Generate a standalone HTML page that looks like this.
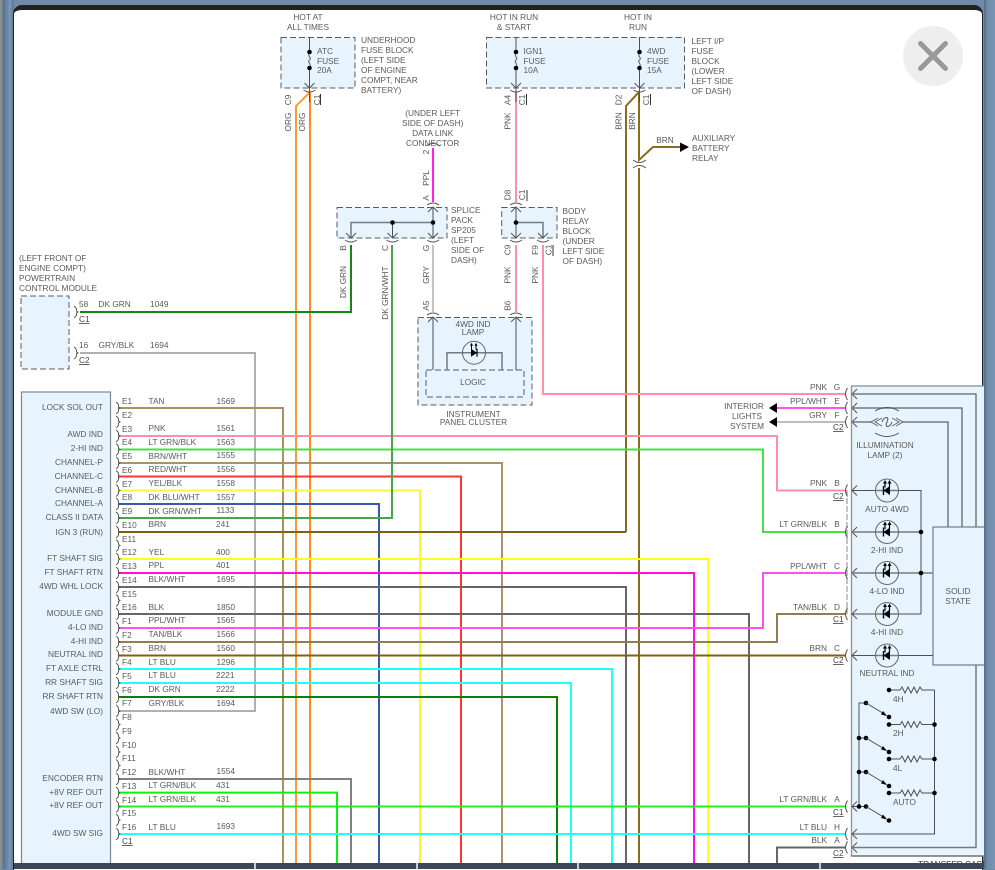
<!DOCTYPE html>
<html>
<head>
<meta charset="utf-8">
<style>
html,body{margin:0;padding:0;width:995px;height:869px;overflow:hidden;background:#6f8ba8;}
#strip{position:absolute;left:0;top:0;width:14px;height:869px;background:linear-gradient(90deg,#8a8d90 0,#8a8d90 2px,#56728f 3px,#7a96b3 10px,#5f7b98 13px);}
#right{position:absolute;left:984px;top:0;width:11px;height:869px;background:linear-gradient(90deg,#4f6a86 0,#6f8ba8 3px,#7a96b3 100%);}
#panel{position:absolute;left:13px;top:5px;width:968px;height:860px;background:#fff;border-top:5px solid #222;border-left:1.5px solid #222;border-right:1.5px solid #222;border-radius:9px 9px 0 0;box-sizing:content-box;}
#bar{position:absolute;left:14px;top:863px;width:970px;height:6px;background:#3d4756;}
.tick{position:absolute;top:863px;width:2px;height:6px;background:#c8ccd0;}
svg#d{position:absolute;left:0;top:0;filter:blur(.35px);}
#close{position:absolute;left:903px;top:26px;width:60px;height:60px;border-radius:50%;background:#eeeeee;}
#x{position:absolute;left:903px;top:26px;}
text{font-family:"Liberation Sans",sans-serif;font-size:8.3px;fill:#5a5a5a;}
.w{fill:none;stroke-width:2;stroke-linejoin:miter;}
.g{fill:none;stroke:#4a5055;stroke-width:1;}
.g2{fill:none;stroke:#727b80;stroke-width:1.5;}
.dash{stroke:#555c61;stroke-width:1;stroke-dasharray:6 3;}
.k{fill:#000;}
.m{text-anchor:middle;}
.e{text-anchor:end;}
.u{text-decoration:underline;fill:#444;}
</style>
</head>
<body>
<div id="strip"></div>
<div id="panel"></div>
<svg id="d" width="995" height="869" viewBox="0 0 995 869" xmlns="http://www.w3.org/2000/svg">
<defs>
<g id="lc"><path d="M116 -6Q119 -4 118.5 -1L120 0L118.5 1Q119 4 116 6" fill="none" stroke="#555" stroke-width="1"/></g>
<g id="rc"><path d="M847.5 -6Q843.5 0 847.5 6" fill="none" stroke="#555" stroke-width="1"/><path d="M857 -5L852 0L857 5" fill="none" stroke="#555" stroke-width="1"/></g>
<g id="dn"><path d="M-5 -5L0 0L5 -5M-6 2Q0 6 6 2" fill="none" stroke="#555" stroke-width="1"/></g>
<g id="up"><path d="M-5 5L0 0L5 5M-6 -2Q0 -6 6 -2" fill="none" stroke="#555" stroke-width="1"/></g>
<g id="fuse"><path d="M0 -15V0M0 16V50" class="g"/><path d="M0 0C-3 4 3 6 0 8C-3 10 3 12 0 16" fill="none" stroke="#555" stroke-width="1"/><circle cx="0" cy="0" r="2.3" class="k"/><circle cx="0" cy="16" r="2.3" class="k"/></g>
<g id="led"><circle cx="0" cy="0" r="11.5" fill="none" stroke="#666" stroke-width="1"/><path d="M-3.5 0L3 -4.5V4.5Z" class="k"/><path d="M-3.5 -4.5V4.5" stroke="#000" stroke-width="1.4"/><path d="M-2 -3V-8M2.5 -3V-8" stroke="#000" stroke-width="1.2"/><path d="M-4 -7L-2 -10.5L0 -7ZM.5 -7L2.5 -10.5L4.5 -7Z" class="k"/></g>
<g id="ledr"><circle cx="0" cy="0" r="11.5" fill="none" stroke="#666" stroke-width="1"/><path d="M3 0L-3 -4V4Z" class="k"/><path d="M3 -4V4" stroke="#000" stroke-width="1.2"/><path d="M-2.5 -3V-8M2 -3V-8" stroke="#000" stroke-width="1"/><path d="M-4 -7L-2.5 -10L-1 -7ZM.5 -7L2 -10L3.5 -7Z" class="k"/></g>
<g id="res"><path d="M889 0H900l2 -3l3 6l3 -6l3 6l3 -6l3 6l3 -6l2 3H934.5" class="g"/><circle cx="889" cy="0" r="2.3" class="k"/></g>
<g id="sw"><circle cx="866" cy="0" r="2.3" class="k"/><circle cx="889" cy="14" r="2.3" class="k"/><path d="M866 0L886 12" class="g"/><path d="M887 13L881 11.5L883 8Z" class="k"/></g>
</defs>

<!-- blue fills -->
<rect x="281" y="37.5" width="74" height="50.5" fill="#e8f4fd"/>
<rect x="486.5" y="37.5" width="198" height="50.5" fill="#e8f4fd"/>
<rect x="337" y="207.5" width="110" height="30.5" fill="#e8f4fd"/>
<rect x="501.7" y="207.5" width="55.3" height="30.5" fill="#e8f4fd"/>
<rect x="418" y="317.5" width="114" height="87.5" fill="#e8f4fd"/>
<rect x="21" y="296" width="48" height="73" fill="#e8f4fd"/>
<rect x="21.5" y="392" width="89" height="475" fill="#e8f4fd" stroke="#7d868b" stroke-width="1.2"/>
<rect x="851.5" y="386" width="135" height="470" fill="#e8f4fd" stroke="#8f989d" stroke-width="1.4"/>
<path d="M851.5 856H983" stroke="#555" stroke-width="1"/>

<!-- wires -->
<path class="w" stroke="#ff9a30" d="M296 866V106L310 92"/>
<path class="w" stroke="#ff8a20" d="M310 92V866"/>
<path class="w" stroke="#ff8fa8" d="M516 92V202M516 245V312"/>
<path class="w" stroke="#ff20ee" d="M433 148V202"/>
<path class="w" stroke="#c4c4c4" d="M433 245V312"/>
<path class="w" stroke="#8a6c20" d="M626 532V106L639 92V160L653 147H681M639 168V866"/>
<path class="w" stroke="#128a12" d="M80 312H351V245"/>
<path class="w" stroke="#ff8fa8" d="M543 245V394H845"/>
<path class="w" stroke="#ff50f0" d="M777 408H845"/>
<path class="w" stroke="#bdbdbd" d="M777 422H845"/>
<path class="w" stroke="#b0b0b0" d="M80 353H255V711H118"/>
<path class="w" stroke="#a8935c" d="M118 408H283V866"/>
<path class="w" stroke="#ff8fa8" d="M118 436H777V490.5H845"/>
<path class="w" stroke="#44e044" d="M118 449.5H763V532H845"/>
<path class="w" stroke="#a89268" d="M118 463H502V866"/>
<path class="w" stroke="#ff3535" d="M118 476.5H461V866"/>
<path class="w" stroke="#f8f830" d="M118 490.5H420V866"/>
<path class="w" stroke="#3a58b0" d="M118 504H379V866"/>
<path class="w" stroke="#4aa54a" d="M118 518H392V245"/>
<path class="w" stroke="#80610f" d="M118 532H626"/>
<path class="w" stroke="#ffff20" d="M118 559H708V866"/>
<path class="w" stroke="#ff10e0" d="M118 573H694V866"/>
<path class="w" stroke="#666" d="M118 587H626V866"/>
<path class="w" stroke="#666" d="M118 614H749V866"/>
<path class="w" stroke="#ff50f0" d="M118 628H763V573H845"/>
<path class="w" stroke="#8f7e55" d="M118 642H777V614H845"/>
<path class="w" stroke="#80610f" d="M118 655.5H845"/>
<path class="w" stroke="#20ffff" d="M118 669H612V866"/>
<path class="w" stroke="#20ffff" d="M118 683H571V866"/>
<path class="w" stroke="#0a800a" d="M118 697H557V866"/>
<path class="w" stroke="#808080" d="M118 779H351V866"/>
<path class="w" stroke="#10f010" d="M118 792.6H337V866"/>
<path class="w" stroke="#20f020" d="M118 806.5H845"/>
<path class="w" stroke="#20ffff" d="M118 834H845"/>
<path class="w" stroke="#666" d="M845 847.5H777V866"/>
<path d="M847 490V614" stroke="#888" stroke-width="1" stroke-dasharray="6 2"/>

<!-- triangles -->
<path class="k" d="M680 142.5L689 147L680 152Z"/>
<path class="k" d="M769 408L777 403V413Z"/>
<path class="k" d="M769 422L777 417V427Z"/>

<!-- connectors left -->
<use href="#lc" y="408"/><use href="#lc" y="422"/><use href="#lc" y="436"/><use href="#lc" y="449.5"/><use href="#lc" y="463"/><use href="#lc" y="476.5"/><use href="#lc" y="490.5"/><use href="#lc" y="504"/><use href="#lc" y="518"/><use href="#lc" y="532"/><use href="#lc" y="545.5"/><use href="#lc" y="559"/><use href="#lc" y="573"/><use href="#lc" y="587"/><use href="#lc" y="600.5"/><use href="#lc" y="614"/><use href="#lc" y="628"/><use href="#lc" y="642"/><use href="#lc" y="655.5"/><use href="#lc" y="669"/><use href="#lc" y="683"/><use href="#lc" y="697"/><use href="#lc" y="711"/><use href="#lc" y="724.5"/><use href="#lc" y="738"/><use href="#lc" y="752"/><use href="#lc" y="765.5"/><use href="#lc" y="779"/><use href="#lc" y="793"/><use href="#lc" y="806.5"/><use href="#lc" y="820"/><use href="#lc" y="834"/>
<use href="#lc" x="-42" y="312"/><use href="#lc" x="-42" y="353"/>

<!-- connectors right -->
<use href="#rc" y="394"/><use href="#rc" y="408"/><use href="#rc" y="422"/><use href="#rc" y="490.5"/><use href="#rc" y="532"/><use href="#rc" y="573"/><use href="#rc" y="614"/><use href="#rc" y="655.5"/><use href="#rc" y="806.5"/><use href="#rc" y="834"/><use href="#rc" y="847.5"/>

<!-- dashed boxes -->
<rect x="281" y="37.5" width="74" height="50.5" fill="none" class="dash"/>
<rect x="486.5" y="37.5" width="198" height="50.5" fill="none" class="dash"/>
<rect x="337" y="207.5" width="110" height="30.5" fill="none" class="dash"/>
<rect x="501.7" y="207.5" width="55.3" height="30.5" fill="none" class="dash"/>
<rect x="418" y="317.5" width="114" height="87.5" fill="none" class="dash"/>
<rect x="426" y="370" width="98" height="27" fill="none" class="dash"/>
<rect x="21" y="296" width="48" height="73" fill="none" class="dash"/>

<!-- fuses -->
<use href="#fuse" x="309.5" y="52"/><use href="#dn" x="309.5" y="88"/>
<use href="#fuse" x="516" y="52"/><use href="#dn" x="516" y="88"/>
<use href="#fuse" x="639.5" y="52"/><use href="#dn" x="639.5" y="88"/>
<path d="M633 160Q639.5 165 646 160M633 168Q639.5 163 646 168" fill="none" stroke="#555"/>

<!-- splice -->
<path class="g2" d="M351 238V222.5H433"/>
<path class="g" d="M392.5 222.5V238M433 207.5V238M516 207.5V238"/>
<path class="g2" d="M516 222.5H543V238"/>
<circle cx="392.5" cy="222.5" r="2.3" class="k"/><circle cx="433" cy="222.5" r="2.3" class="k"/><circle cx="516" cy="222.5" r="2.3" class="k"/>
<use href="#dn" x="351" y="238"/><use href="#dn" x="392.5" y="238"/><use href="#dn" x="433" y="238"/><use href="#dn" x="516" y="238"/><use href="#dn" x="543" y="238"/>
<use href="#up" x="433" y="207"/><use href="#up" x="516" y="207"/>
<use href="#up" x="433" y="317"/><use href="#up" x="516" y="317"/>
<path d="M426 146Q433 141 440 146" fill="none" stroke="#555"/>

<!-- cluster -->
<path class="g" d="M433 317V370M516 317V370"/>
<path class="g2" d="M447 370V352.7H502V370"/>
<use href="#ledr" x="474" y="352.7"/>

<!-- right box internals -->
<path class="g2" d="M852 394H976V527M976 665V847.5H852"/>
<path class="g2" d="M852 408H962V527"/>
<path class="g2" d="M852 422H872M902 422H948V527"/>
<rect x="933" y="527" width="54" height="138" fill="#e8f4fd" stroke="#5c6368" stroke-width="1"/>
<path class="g" d="M852 490.5H921V614M852 614H921M852 655.5H933"/>
<path class="g2" d="M852 532H921M852 573H933"/>
<circle cx="921" cy="532" r="2.3" class="k"/><circle cx="921" cy="573" r="2.3" class="k"/>
<circle cx="887" cy="490.5" r="11.5" fill="#e8f4fd"/><circle cx="887" cy="532" r="11.5" fill="#e8f4fd"/><circle cx="887" cy="573" r="11.5" fill="#e8f4fd"/><circle cx="887" cy="614" r="11.5" fill="#e8f4fd"/><circle cx="887" cy="655.5" r="11.5" fill="#e8f4fd"/>
<path class="g2" d="M876 490.5H898M876 532H898M876 573H898M876 614H898M876 655.5H898"/>
<use href="#led" x="887" y="490.5"/><use href="#led" x="887" y="532"/><use href="#led" x="887" y="573"/><use href="#led" x="887" y="614"/><use href="#led" x="887" y="655.5"/>
<!-- lamp -->
<path d="M875 411Q887 404 899 411M875 433Q887 440 899 433" fill="none" stroke="#555" stroke-width="1"/>
<path d="M878 418L871 422L878 426M882 418L875 422L882 426M896 418L903 422L896 426M892 418L899 422L892 426" fill="none" stroke="#666" stroke-width="1"/>
<path d="M882 422C884 416 890 416 887 422C884 428 890 428 892 422" fill="none" stroke="#555" stroke-width="1"/>
<!-- switch -->
<path class="g" d="M934.5 690V834H852M866 703H859V806.5M852 806.5H866M859 738H866M859 772H866"/>
<use href="#res" y="690"/><use href="#res" y="724.5"/><use href="#res" y="759"/><use href="#res" y="793"/>
<circle cx="934.5" cy="724.5" r="2.3" class="k"/><circle cx="934.5" cy="759" r="2.3" class="k"/><circle cx="934.5" cy="793" r="2.3" class="k"/>
<use href="#sw" y="703"/><use href="#sw" y="738"/><use href="#sw" y="772"/><use href="#sw" y="806.5"/>
<circle cx="859" cy="738" r="2.3" class="k"/><circle cx="859" cy="772" r="2.3" class="k"/><circle cx="859" cy="806.5" r="2.3" class="k"/>

<!-- top labels -->
<text x="308" y="20" class="m">HOT AT</text><text x="308" y="30" class="m">ALL TIMES</text>
<text x="514" y="20" class="m">HOT IN RUN</text><text x="514" y="30" class="m">&amp; START</text>
<text x="638" y="20" class="m">HOT IN</text><text x="638" y="30" class="m">RUN</text>
<text x="317" y="54">ATC</text><text x="317" y="64">FUSE</text><text x="317" y="73">20A</text>
<text x="523.5" y="54">IGN1</text><text x="523.5" y="64">FUSE</text><text x="523.5" y="73">10A</text>
<text x="647" y="54">4WD</text><text x="647" y="64">FUSE</text><text x="647" y="73">15A</text>
<text x="361" y="43">UNDERHOOD</text><text x="361" y="53">FUSE BLOCK</text><text x="361" y="63">(LEFT SIDE</text><text x="361" y="73">OF ENGINE</text><text x="361" y="83">COMPT, NEAR</text><text x="361" y="93">BATTERY)</text>
<text x="691.5" y="44">LEFT I/P</text><text x="691.5" y="54">FUSE</text><text x="691.5" y="64">BLOCK</text><text x="691.5" y="74">(LOWER</text><text x="691.5" y="84">LEFT SIDE</text><text x="691.5" y="94">OF DASH)</text>
<text x="665" y="143" class="m">BRN</text>
<text x="692" y="141">AUXILIARY</text><text x="692" y="151">BATTERY</text><text x="692" y="161">RELAY</text>
<text x="432.7" y="116" class="m">(UNDER LEFT</text><text x="432.7" y="126" class="m">SIDE OF DASH)</text><text x="432.7" y="136" class="m">DATA LINK</text><text x="432.7" y="146" class="m">CONNECTOR</text>
<text x="451" y="213">SPLICE</text><text x="451" y="223">PACK</text><text x="451" y="233">SP205</text><text x="451" y="243">(LEFT</text><text x="451" y="253">SIDE OF</text><text x="451" y="263">DASH)</text>
<text x="562.5" y="214">BODY</text><text x="562.5" y="224">RELAY</text><text x="562.5" y="234">BLOCK</text><text x="562.5" y="244">(UNDER</text><text x="562.5" y="254">LEFT SIDE</text><text x="562.5" y="264">OF DASH)</text>
<text x="473" y="327" class="m">4WD IND</text><text x="473" y="335" class="m">LAMP</text>
<text x="473" y="385" class="m">LOGIC</text>
<text x="473.5" y="417" class="m">INSTRUMENT</text><text x="473.5" y="425" class="m">PANEL CLUSTER</text>

<!-- rotated labels -->
<g class="m" text-anchor="middle">
<text transform="translate(291,100) rotate(-90)">C9</text>
<text transform="translate(291,122) rotate(-90)">ORG</text>
<text transform="translate(305,122) rotate(-90)">ORG</text>
<text transform="translate(320,100) rotate(-90)">C1</text>
<text transform="translate(510.7,100) rotate(-90)">A4</text>
<text transform="translate(525,100) rotate(-90)">C1</text>
<text transform="translate(510.7,121) rotate(-90)">PNK</text>
<text transform="translate(621.6,100) rotate(-90)">D2</text>
<text transform="translate(621.6,121) rotate(-90)">BRN</text>
<text transform="translate(635,121) rotate(-90)">BRN</text>
<text transform="translate(649,100) rotate(-90)">C1</text>
<text transform="translate(429,152) rotate(-90)">2</text>
<text transform="translate(429,178) rotate(-90)">PPL</text>
<text transform="translate(429,198) rotate(-90)">A</text>
<text transform="translate(346,248) rotate(-90)">B</text>
<text transform="translate(346,282) rotate(-90)">DK GRN</text>
<text transform="translate(388,248) rotate(-90)">C</text>
<text transform="translate(388,293) rotate(-90)">DK GRN/WHT</text>
<text transform="translate(429,248) rotate(-90)">G</text>
<text transform="translate(429,275) rotate(-90)">GRY</text>
<text transform="translate(429,305.7) rotate(-90)">A5</text>
<text transform="translate(510.7,305.7) rotate(-90)">B6</text>
<text transform="translate(510.7,250) rotate(-90)">C9</text>
<text transform="translate(510.7,275) rotate(-90)">PNK</text>
<text transform="translate(538,250) rotate(-90)">F9</text>
<text transform="translate(538,275) rotate(-90)">PNK</text>
<text transform="translate(551.7,250) rotate(-90)">C1</text>
<text transform="translate(510.7,195) rotate(-90)">D8</text>
<text transform="translate(525,195) rotate(-90)">C1</text>
</g>
<path d="M320.5 94V105M526.5 94V105M650.5 94V105M527 190V201M553 245V256" stroke="#333" stroke-width="1"/>

<!-- PCM -->
<text x="19" y="261">(LEFT FRONT OF</text><text x="19" y="271">ENGINE COMPT)</text><text x="19" y="281">POWERTRAIN</text><text x="19" y="291">CONTROL MODULE</text>
<text x="79" y="307">58</text><text x="98.5" y="307">DK GRN</text><text x="150" y="307">1049</text><text x="79" y="322" class="u">C1</text>
<text x="79" y="348">16</text><text x="98.5" y="348">GRY/BLK</text><text x="150" y="348">1694</text><text x="79" y="363" class="u">C2</text>

<!-- module names -->
<g text-anchor="end">
<text x="103" y="410">LOCK SOL OUT</text><text x="103" y="437">AWD IND</text><text x="103" y="451">2-HI IND</text><text x="103" y="465">CHANNEL-P</text><text x="103" y="479">CHANNEL-C</text><text x="103" y="493">CHANNEL-B</text><text x="103" y="506">CHANNEL-A</text><text x="103" y="520">CLASS II DATA</text><text x="103" y="535">IGN 3 (RUN)</text><text x="103" y="561">FT SHAFT SIG</text><text x="103" y="575">FT SHAFT RTN</text><text x="103" y="589">4WD WHL LOCK</text><text x="103" y="616">MODULE GND</text><text x="103" y="630">4-LO IND</text><text x="103" y="644">4-HI IND</text><text x="103" y="657">NEUTRAL IND</text><text x="103" y="671">FT AXLE CTRL</text><text x="103" y="685">RR SHAFT SIG</text><text x="103" y="699">RR SHAFT RTN</text><text x="103" y="714">4WD SW (LO)</text><text x="103" y="781">ENCODER RTN</text><text x="103" y="795">+8V REF OUT</text><text x="103" y="808">+8V REF OUT</text><text x="103" y="836">4WD SW SIG</text>
</g>
<!-- pins -->
<text x="122" y="404">E1</text><text x="148.5" y="404">TAN</text><text x="216.5" y="404">1569</text>
<text x="122" y="418">E2</text>
<text x="122" y="432">E3</text><text x="148.5" y="431">PNK</text><text x="216.5" y="431">1561</text>
<text x="122" y="445">E4</text><text x="148.5" y="445">LT GRN/BLK</text><text x="216.5" y="445">1563</text>
<text x="122" y="459">E5</text><text x="148.5" y="459">BRN/WHT</text><text x="216.5" y="458">1555</text>
<text x="122" y="473">E6</text><text x="148.5" y="472">RED/WHT</text><text x="216.5" y="472">1556</text>
<text x="122" y="487">E7</text><text x="148.5" y="486">YEL/BLK</text><text x="216.5" y="486">1558</text>
<text x="122" y="500">E8</text><text x="148.5" y="500">DK BLU/WHT</text><text x="216.5" y="500">1557</text>
<text x="122" y="514">E9</text><text x="148.5" y="514">DK GRN/WHT</text><text x="216.5" y="513">1133</text>
<text x="122" y="528">E10</text><text x="148.5" y="527">BRN</text><text x="216" y="527">241</text>
<text x="122" y="542">E11</text>
<text x="122" y="555">E12</text><text x="148.5" y="555">YEL</text><text x="216" y="555">400</text>
<text x="122" y="569">E13</text><text x="148.5" y="568">PPL</text><text x="216" y="568">401</text>
<text x="122" y="583">E14</text><text x="148.5" y="582">BLK/WHT</text><text x="216.5" y="582">1695</text>
<text x="122" y="597">E15</text>
<text x="122" y="610">E16</text><text x="148.5" y="610">BLK</text><text x="216.5" y="610">1850</text>
<text x="122" y="624">F1</text><text x="148.5" y="623">PPL/WHT</text><text x="216.5" y="623">1565</text>
<text x="122" y="638">F2</text><text x="148.5" y="637">TAN/BLK</text><text x="216.5" y="637">1566</text>
<text x="122" y="652">F3</text><text x="148.5" y="651">BRN</text><text x="216.5" y="651">1560</text>
<text x="122" y="665">F4</text><text x="148.5" y="665">LT BLU</text><text x="216.5" y="665">1296</text>
<text x="122" y="679">F5</text><text x="148.5" y="678">LT BLU</text><text x="216" y="678">2221</text>
<text x="122" y="693">F6</text><text x="148.5" y="692">DK GRN</text><text x="216" y="692">2222</text>
<text x="122" y="706">F7</text><text x="148.5" y="706">GRY/BLK</text><text x="216.5" y="706">1694</text>
<text x="122" y="720">F8</text><text x="122" y="734">F9</text><text x="122" y="748">F10</text><text x="122" y="761">F11</text>
<text x="122" y="775">F12</text><text x="148.5" y="775">BLK/WHT</text><text x="216.5" y="774">1554</text>
<text x="122" y="789">F13</text><text x="148.5" y="788">LT GRN/BLK</text><text x="216" y="788">431</text>
<text x="122" y="803">F14</text><text x="148.5" y="802">LT GRN/BLK</text><text x="216" y="802">431</text>
<text x="122" y="816">F15</text>
<text x="122" y="830">F16</text><text x="148.5" y="830">LT BLU</text><text x="216.5" y="829">1693</text>
<text x="122" y="844" class="u">C1</text>

<!-- right labels -->
<g text-anchor="end">
<text x="827" y="390">PNK</text><text x="827" y="404">PPL/WHT</text><text x="827" y="418">GRY</text>
<text x="827" y="486">PNK</text><text x="827" y="527">LT GRN/BLK</text><text x="827" y="569">PPL/WHT</text><text x="827" y="610">TAN/BLK</text><text x="827" y="651">BRN</text>
<text x="827" y="802">LT GRN/BLK</text><text x="827" y="830">LT BLU</text><text x="827" y="843">BLK</text>
</g>
<g text-anchor="middle">
<text x="837" y="390">G</text><text x="837" y="404">E</text><text x="837" y="418">F</text><text x="837" y="486">B</text><text x="837" y="527">B</text><text x="837" y="569">C</text><text x="837" y="610">D</text><text x="837" y="651">C</text><text x="837" y="802">A</text><text x="837" y="830">H</text><text x="837" y="843">A</text>
<text x="744" y="409">INTERIOR</text><text x="747" y="419">LIGHTS</text><text x="747" y="429">SYSTEM</text>
<text x="885" y="448">ILLUMINATION</text><text x="885" y="458">LAMP (2)</text>
<text x="887" y="512">AUTO 4WD</text><text x="887" y="553">2-HI IND</text><text x="887" y="594">4-LO IND</text><text x="887" y="635">4-HI IND</text><text x="887" y="676">NEUTRAL IND</text>
<text x="958" y="594">SOLID</text><text x="958" y="604">STATE</text>
</g>
<text x="833" y="430" class="u">C2</text><text x="833" y="499" class="u">C2</text><text x="833" y="622" class="u">C1</text><text x="833" y="663" class="u">C2</text><text x="833" y="815" class="u">C1</text><text x="833" y="856" class="u">C2</text>
<text x="893" y="702">4H</text><text x="893" y="736">2H</text><text x="893" y="771">4L</text><text x="893" y="805">AUTO</text>
<text x="918" y="867" style="fill:#333">TRANSFER CASE</text>
</svg>
<div id="right"></div>
<div id="bar"></div>
<div class="tick" style="left:254px"></div>
<div class="tick" style="left:416px"></div>
<div class="tick" style="left:577px"></div>
<div class="tick" style="left:819px"></div>
<div id="close"></div>
<svg id="x" width="60" height="60" viewBox="0 0 60 60" xmlns="http://www.w3.org/2000/svg"><path d="M17.5 17.5L42.5 42.5M42.5 17.5L17.5 42.5" stroke="#999" stroke-width="5" stroke-linecap="round" fill="none"/></svg>
</body>
</html>
